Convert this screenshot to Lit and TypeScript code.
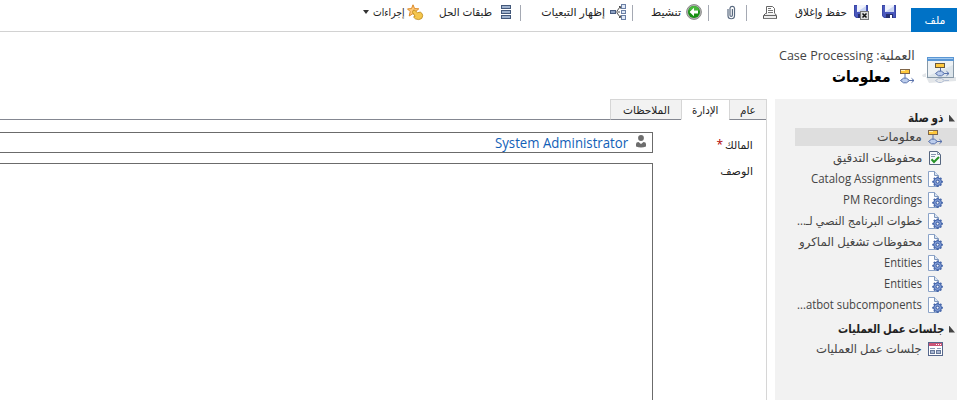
import { LitElement, html, css, svg } from "lit";
import { customElement, property } from "lit/decorators.js";
import { styleMap } from "lit/directives/style-map.js";

const flow = svg`
  <rect x="1.500" y="1.500" width="9" height="4" fill="#ffc83d" stroke="#80664a"/>
  <path d="M2 2.500h4" stroke="#fff0b8"/>
  <path d="M6 6v4M10 12.500h5M12.500 10.300l2.500 2.200-2.500 2.200" fill="none" stroke="#5871ab"/>
  <path d="M1.500 12.500l3-2.300h3l3 2.300-3 2.300h-3z" fill="#bccdec" stroke="#5871ab"/>`;

const floppy = svg`
  <path d="M1 1h14v13H3l-2-2z" fill="#4a58bd"/>
  <path d="M1.500 1.500h13v12H3.500l-2-2z" fill="none" stroke="#3a47a6"/>
  <rect x="4" y="1" width="9" height="7" fill="#f1f4fd"/>
  <path d="M4 8l9-6v6z" fill="#c9d4f2"/>
  <rect x="5" y="10" width="7" height="4" fill="#27306f"/>
  <rect x="9" y="11" width="2" height="3" fill="#fff"/>`;

const teeth = [0, 45, 90, 135, 180, 225, 270, 315];

const icons: Record<string, unknown> = {
  flow,
  save: floppy,
  saveClose: svg`${floppy}
    <rect x="7.500" y="7.500" width="8" height="8" fill="#dcdcdc" stroke="#777"/>
    <path d="M9.500 9.500l4 4M13.500 9.500l-4 4" stroke="#111" stroke-width="1.500"/>`,
  print: svg`
    <path d="M4.500 9.500v-7h6l2 2v5" fill="#fff" stroke="#666"/>
    <path d="M6 4.500h3M6 6.500h5M6 8.500h5" stroke="#777"/>
    <path d="M4.500 9.500h-1l-2 2v3h13v-3l-1.500-2" fill="#eee" stroke="#555"/>
    <path d="M2 11.500h12" stroke="#666"/><path d="M1 14.500h14" stroke="#777"/>`,
  clip: svg`
    <path d="M5 5v6.500a3 3 0 0 0 6.500 0V4.200a2.300 2.300 0 0 0-4.500 0v7a1.200 1.200 0 0 0 2.400 0V5" fill="none" stroke="#5a6a80" stroke-width="1.200"/>`,
  go: svg`
    <circle cx="8" cy="8" r="7.400" fill="#b4b4b4" stroke="#8a8a8a"/>
    <circle cx="8" cy="8" r="6" fill="#168f12"/>
    <path d="M3 6.500a5 4.500 0 0 1 10 0z" fill="#49b83d"/>
    <path d="M3.500 8l4.500-4.200v2.700h4v3H8v2.700z" fill="#fff"/>`,
  deps: svg`
    <path d="M6 8h4M7 7l3-4M7 9l3 4M9 2.500h1.500v2M9 13.500h1.500v-2" stroke="#4c4c4c" fill="none"/>
    <rect x=".5" y="6.500" width="5" height="3" fill="#8da2c4" stroke="#475b80"/>
    <rect x="11.500" y=".5" width="4" height="4" fill="#dfe9f8" stroke="#6b7fa5"/>
    <rect x="11.500" y="6.500" width="4" height="3" fill="#dfe9f8" stroke="#6b7fa5"/>
    <rect x="11.500" y="11.500" width="4" height="4" fill="#dfe9f8" stroke="#6b7fa5"/>`,
  layers: svg`
    <g fill="#9fb2cd" stroke="#43587a"><rect x="3.500" y="1.500" width="9" height="3"/><rect x="3.500" y="6.500" width="9" height="3"/><rect x="3.500" y="11.500" width="9" height="3"/></g>`,
  star: svg`
    <path d="M6 .8l1.600 3.800 4.200.2-3.200 2.800 1 4.400L6 9.600l-3.800 2.400 1-4.400L.5 4.900l4-.3z" fill="#ffc978" stroke="#dc8a28"/>
    <path d="M6 6.500q1-1 2 0l2.500 2.200 2.800-.6q2.400 1.200 2.400 3.600 0 3.600-4 3.900-3.700 0-5.200-2.600l1.600-.7-2.600-4z" fill="#f5c64c" stroke="#b98618" stroke-width=".8"/>`,
  audit: svg`
    <path d="M2.500 1.500h8l3 3v10h-11z" fill="#f7f9fc" stroke="#56667f"/>
    <path d="M10.500 1.500v3h3M4 4.500h5M4 6.500h4" fill="none" stroke="#8494ad"/>
    <path d="M4.500 9.300l2.500 2.700 5-5" fill="none" stroke="#279327" stroke-width="2"/>`,
  gear: svg`
    <path d="M1.500.5h6l4 4v11h-10z" fill="#fff" stroke="#8ba3c8"/>
    <path d="M7.500.5v4h4" fill="#dbe5f4" stroke="#7f97bb"/>
    ${teeth.map((a) => svg`<rect x="9.600" y="5.400" width="2" height="2.500" rx=".5" fill="#4464a8" transform="rotate(${a} 10.600 10.700)"/>`)}
    <circle cx="10.600" cy="10.700" r="3.900" fill="#7e9bd6" stroke="#4464a8"/>
    <circle cx="10.600" cy="10.700" r="1.500" fill="#f2f6fd" stroke="#3c5a9c"/>`,
  session: svg`
    <rect x="1.500" y="1.500" width="14" height="13" fill="#fff" stroke="#56678c"/>
    <rect x="2" y="2" width="13" height="3" fill="#cc5577"/>
    <path d="M9 3.500h5" stroke="#fff" stroke-dasharray="1 1"/>
    <path d="M3 7.500h5M10 7.500h4" stroke="#8b99b5"/>
    <rect x="3.500" y="9.500" width="4" height="3" fill="#a9b6d0" stroke="#66789a"/><rect x="9.500" y="9.500" width="4" height="3" fill="#a9b6d0" stroke="#66789a"/>`,
  person: svg`
    <circle cx="8" cy="3" r="2.900" fill="#6d6d6d"/>
    <path d="M3 11.500V9q0-2 2.500-2L8 9l2.500-2Q13 7 13 9v2.500q-5 1.800-10 0z" fill="#6d6d6d"/>`,
};

@customElement("ui-icon")
class UiIcon extends LitElement {
  @property() name = "";
  static styles = css`
    :host { display: block; flex: none; width: 16px; height: 16px; }
    svg { display: block; width: 100%; height: 100%; overflow: visible; }
  `;
  render() {
    return html`<svg viewBox="0 0 16 16">${icons[this.name]}</svg>`;
  }
}

/* A single line of text set to an exact measure. */
@customElement("fit-text")
class FitText extends LitElement {
  @property({ type: Number }) measure = 0;
  @property() text = "";
  static styles = css`
    :host { display: block; flex: none; white-space: nowrap; direction: rtl; }
    span { display: inline-block; transform-origin: 100% 50%; }
  `;
  firstUpdated() {
    this.fit();
    document.fonts?.ready.then(() => this.fit());
  }
  fit() {
    const el = this.renderRoot.querySelector("span")!;
    this.style.width = this.measure + "px";
    if (el.offsetWidth) el.style.transform = "scaleX(" + this.measure / el.offsetWidth + ")";
  }
  render() {
    return html`<span>${this.text}</span>`;
  }
}

interface Tool { gap: number; icon?: string; text?: string; w?: number; sep?: boolean; caret?: boolean }
const tools: Tool[] = [
  { gap: 14, icon: "save" },
  { gap: 12, icon: "saveClose" },
  { gap: 6, text: "حفظ وإغلاق", w: 52 },
  { gap: 17, icon: "print" },
  { gap: 15, sep: true },
  { gap: 7, icon: "clip" },
  { gap: 14, sep: true },
  { gap: 6, icon: "go" },
  { gap: 5, text: "تنشيط", w: 30 },
  { gap: 18, sep: true },
  { gap: 6, icon: "deps" },
  { gap: 5, text: "إظهار التبعيات", w: 64 },
  { gap: 20, sep: true },
  { gap: 6, icon: "layers" },
  { gap: 6, text: "طبقات الحل", w: 53 },
  { gap: 16, icon: "star" },
  { gap: 2, text: "إجراءات", w: 32 },
  { gap: 4, caret: true },
];

const related = [
  { icon: "flow", text: "معلومات", w: 45, on: true },
  { icon: "audit", text: "محفوظات التدقيق", w: 89 },
  { icon: "gear", text: "Catalog Assignments", w: 111 },
  { icon: "gear", text: "PM Recordings", w: 79 },
  { icon: "gear", text: "خطوات البرنامج النصي لـ...", w: 126 },
  { icon: "gear", text: "محفوظات تشغيل الماكرو", w: 123 },
  { icon: "gear", text: "Entities", w: 38 },
  { icon: "gear", text: "Entities", w: 38 },
  { icon: "gear", text: "atbot subcomponents...", w: 125 },
];
const sessions = [{ icon: "session", text: "جلسات عمل العمليات", w: 106 }];

@customElement("app-root")
class AppRoot extends LitElement {
  static styles = css`
    :host {
      display: flex; flex-direction: column; direction: rtl; width: 957px; height: 400px;
      overflow: hidden; background: #fff; color: #222;
      font: 11px/16px "Open Sans", "DejaVu Sans", sans-serif;
    }
    .bar { display: flex; height: 32px; flex: none; }
    .file { width: 46px; height: 24px; margin-top: 8px; background: #0072c6; color: #fff; display: flex; justify-content: center; align-items: center; padding-left: 2px; box-sizing: border-box; }
    .tools { flex: 1; display: flex; align-items: center; height: 24px; padding-bottom: 7px; border-bottom: 1px solid #d2d2d2; }
    .sep { width: 1px; height: 16px; background: #a5a9b3; margin-top: 2px; }
    .caret { border: 3px solid transparent; border-top: 4px solid #333; border-bottom: 0; }
    .head { display: flex; height: 67px; flex: none; }
    .entity { width: 32px; height: 28px; margin-top: 24px; flex: none; }
    .entity svg { display: block; overflow: visible; }
    .names { margin: 13px 10px 0 0; }
    .crumb { color: #444; font-size: 13px; line-height: 20px; }
    .title { display: flex; align-items: center; gap: 9px; height: 22px; color: #000; font-size: 16px; font-weight: bold; }
    .main { display: flex; flex: 1; min-height: 0; }
    .side { width: 182px; flex: none; background: #f2f2f2; padding-top: 9px; box-sizing: border-box; font-size: 12px; color: #444; }
    .group { display: flex; align-items: center; height: 20px; padding-right: 2px; gap: 6px; color: #222; font-weight: bold; }
    .second { margin-top: 5px; margin-bottom: 1px; }
    .tri { width: 6px; height: 7px; margin-left: -1px; background: #444; clip-path: polygon(100% 0, 100% 100%, 0 100%); transform: scaleX(-1); }
    .item { display: flex; align-items: center; gap: 5px; height: 18px; padding-right: 14px; margin: 0 0 3px 20px; }
    .on { background: #dedede; }
    .form { width: 767px; margin-right: 8px; flex: none; display: flex; flex-direction: column; border-right: 1px solid #d6d6d6; box-sizing: border-box; }
    .tabs { display: flex; height: 21px; flex: none; }
    .tab { display: flex; align-items: center; justify-content: center; box-sizing: border-box; background: #f2f2f2; border: 1px solid #d6d6d6; border-right: 0; border-bottom: 1px solid #848791; }
    .active { background: #fff; border-bottom-color: #fff; }
    .rest { flex: 1; border-bottom: 1px solid #848791; }
    .row { display: flex; flex: none; padding-right: 13px; }
    .label { display: flex; width: 100px; flex: none; }
    .req { color: #b00000; font-size: 12px; margin-right: 2px; }
    .box { flex: 1; box-sizing: border-box; border: 1px solid #6b6b6b; border-left: 0; }
    .lookup { height: 21px; display: flex; align-items: center; padding-right: 3px; gap: 5px; color: #1160b7; font-size: 14px; }
    .owner { margin-top: 12px; height: 21px; }
    .owner .label { padding-top: 5px; }
    .desc { flex: 1; margin-top: 10px; }
    .area { margin-bottom: -2px; }
  `;

  text(text: string, w: number) {
    return html`<fit-text .text=${text} .measure=${w}></fit-text>`;
  }

  tool(t: Tool) {
    const gap = styleMap({ marginRight: t.gap + "px" });
    if (t.sep) return html`<div class="sep" style=${gap}></div>`;
    if (t.caret) return html`<div class="caret" style=${gap}></div>`;
    if (t.icon) return html`<ui-icon name=${t.icon} style=${gap}></ui-icon>`;
    return html`<div style=${gap}>${this.text(t.text!, t.w!)}</div>`;
  }

  item(i: { icon: string; text: string; w: number; on?: boolean }) {
    return html`<div class="item ${i.on ? "on" : ""}"><ui-icon name=${i.icon}></ui-icon>${this.text(i.text, i.w)}</div>`;
  }

  tab(text: string, w: number, box: number, active = false) {
    return html`<div class="tab ${active ? "active" : ""}" style=${styleMap({ width: box + "px" })}>${this.text(text, w)}</div>`;
  }

  render() {
    return html`
      <div class="bar">
        <div class="file">${this.text("ملف", 21)}</div>
        <div class="tools">${tools.map((t) => this.tool(t))}</div>
      </div>
      <div class="head">
        <div class="entity">
          <svg width="32" height="30" viewBox="0 0 32 30">
            <path d="M-3 19l4-2v4h-3zM1 21h30v4l-27 2z" fill="#e3e6e9"/>
            <rect x="2.500" y="1.500" width="26" height="20" fill="#eef2f5" stroke="#8799a8"/>
            <path d="M3 20l25-11v12H3z" fill="#dde5eb"/>
            <rect x="2" y="1" width="27" height="4" fill="#5a96d4"/>
            <path d="M3 2.500h25" stroke="#a4cbef"/>
            <rect x="10.500" y="7.500" width="9" height="4" fill="#ffc83d" stroke="#6a5a3c"/>
            <path d="M15.500 12v3M19 17.500h5M21.500 15.300l2.500 2.200-2.500 2.200" fill="none" stroke="#5871ab"/>
            <path d="M10.500 17.500l3-2.300h3l3 2.300-3 2.300h-3z" fill="#bccdec" stroke="#5871ab"/>
            <path d="M10.500 24.500l3-2h3l3 2-3 2h-3zM20 24.500h4" fill="none" stroke="#b3bfd4"/>
          </svg>
        </div>
        <div class="names">
          <div class="crumb">${this.text("العملية: Case Processing", 136)}</div>
          <div class="title"><ui-icon name="flow"></ui-icon>${this.text("معلومات", 59)}</div>
        </div>
      </div>
      <div class="main">
        <div class="side">
          <div class="group"><div class="tri"></div>${this.text("ذو صلة", 36)}</div>
          ${related.map((i) => this.item(i))}
          <div class="group second"><div class="tri"></div>${this.text("جلسات عمل العمليات", 106)}</div>
          ${sessions.map((i) => this.item(i))}
        </div>
        <div class="form">
          <div class="tabs">
            ${this.tab("عام", 16, 37)}${this.tab("الإدارة", 26, 48, true)}${this.tab("الملاحظات", 47, 71)}
            <div class="rest"></div>
          </div>
          <div class="row owner">
            <div class="label">${this.text("المالك", 28)}<span class="req">*</span></div>
            <div class="box lookup"><ui-icon name="person"></ui-icon>${this.text("System Administrator", 133)}</div>
          </div>
          <div class="row desc">
            <div class="label">${this.text("الوصف", 33)}</div>
            <div class="box area"></div>
          </div>
        </div>
      </div>`;
  }
}
